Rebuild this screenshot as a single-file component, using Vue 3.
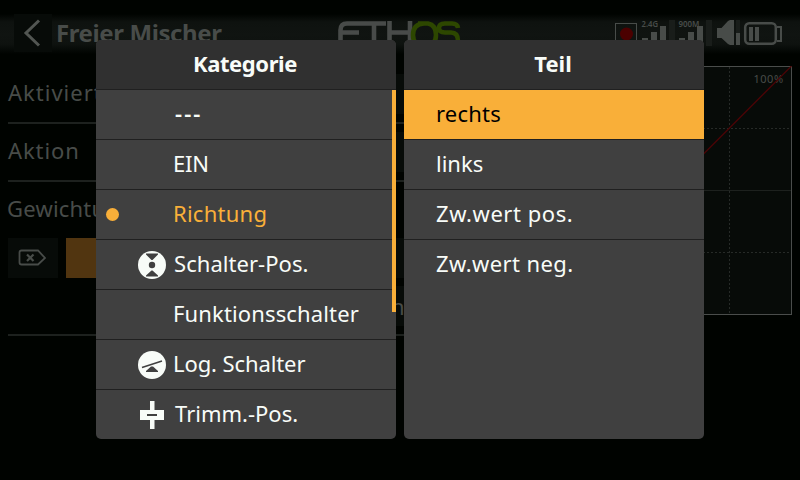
<script setup>
const categories = [
  { label: '---', icon: '', spacing: 2.1, x: 79, bold: true },
  { label: 'EIN', icon: '', spacing: -0.2, x: 77 },
  { label: 'Richtung', icon: '', spacing: 0.25, x: 77, current: true },
  { label: 'Schalter-Pos.', icon: 'switch', spacing: 0.05, x: 78 },
  { label: 'Funktionsschalter', icon: '', spacing: 0.14, x: 77 },
  { label: 'Log. Schalter', icon: 'logic', spacing: -0.1, x: 77 },
  { label: 'Trimm.-Pos.', icon: 'trim', spacing: 0, x: 79 },
]
const parts = [
  { label: 'rechts', spacing: 0.2, selected: true },
  { label: 'links', spacing: 0 },
  { label: 'Zw.wert pos.', spacing: 0.55 },
  { label: 'Zw.wert neg.', spacing: 0.4 },
]
</script>

<template>
  <div class="screen">
    <header class="topbar">
      <div class="back">
        <svg width="38" height="38" viewBox="0 0 38 38"><path d="M25 6.5 L12 19 L25 31.5" fill="none" stroke="#525652" stroke-width="3" /></svg>
      </div>
      <h1>Freier Mischer</h1>
      <svg class="logo" width="128" height="30" viewBox="0 0 128 30" fill="none" stroke-width="4.6">
        <path d="M2.5 26 V10 Q2.5 3.5 9 3.5 H48 M2.5 12.500 H21 M36 4 V26 M51.500 1 V26 M72 1 V26 M51.500 12.500 H72" stroke="#484b49" />
        <path d="M80 3.500 H90 Q98 5 98 15 Q98 26 86.500 26 Q75 26 75 15 Q75 4 86 3.500 M120 8 Q119.500 3.500 114 3.500 H107 Q101 3.500 101 8 Q101 12.500 107 12.500 H113 Q120 12.500 120 21" stroke="#2d4700" />
      </svg>
      <svg class="status" width="170" height="30" viewBox="0 0 170 30">
        <rect x="0.500" y="5.500" width="21" height="21" fill="none" stroke="#484c49" />
        <circle cx="11.500" cy="16" r="6.500" fill="#4b0000" />
        <path d="M54 2h6v26h-6zM91 2h6v26h-6zM121 2h4v13h-4z" fill="#191d1a" />
        <g fill="#484c49">
          <text x="26.500" y="8.500" font-size="8.500" font-weight="600" textLength="16.500" lengthAdjust="spacingAndGlyphs">2.4G</text>
          <text x="63.500" y="8.500" font-size="8.500" font-weight="600" textLength="21" lengthAdjust="spacingAndGlyphs">900M</text>
          <path d="M27 20h6v6h-6zM36 14h6v12h-6zM45 8h6v18h-6zM64 20h6v6h-6zM73 14h6v12h-6zM82 8h6v18h-6z" />
          <path d="M102 10h4.500L113 3l2-1h4v25h-4l-2-1-6.500-6H102zM121 15h4v12h-4zM134 9h4v14h-4zM140 9h4v14h-4z" />
        </g>
        <rect x="130.200" y="5.200" width="30.600" height="20.600" rx="4" fill="none" stroke="#484c49" stroke-width="2.500" />
        <path d="M162 9h4v14h-4" fill="none" stroke="#484c49" stroke-width="2" />
      </svg>
    </header>

    <main class="page">
      <section class="form">
        <div class="field first"><span>Aktiviert</span><i class="value"></i></div>
        <div class="field"><span>Aktion</span><i class="value"></i></div>
        <div class="field weight"><span>Gewichtung</span></div>
        <div class="controls">
          <div class="erase">
            <svg width="28" height="18" viewBox="0 0 28 18" fill="none" stroke="#484c49" stroke-width="1.800"><path d="M3.500 1.500 H20 L27 9 L20 15.500 H3.500 Q1.500 15.500 1.500 13.500 V3.500 Q1.500 1.500 3.500 1.500Z" /><path d="M9 5.500 L15.500 12 M15.500 5.500 L9 12" stroke-width="2.200" /></svg>
          </div>
          <div class="accent"></div>
          <div class="blank"></div>
        </div>
        <div class="field last"><i class="value">h</i></div>
      </section>
      <svg class="graph" width="249" height="249" viewBox="0 0 249 249" fill="none">
        <rect x="0.500" y="0.500" width="248" height="248" fill="#070b08" stroke="#4a4d4b" />
        <path d="M0 124.500H248" stroke="#1d211e" />
        <path d="M0 62.500H248M0 186.500H248M186.500 1V248" stroke="#262a27" stroke-dasharray="2 2" />
        <text x="210.500" y="17" font-size="11" letter-spacing="0.500" fill="#484c49">100%</text>
        <path d="M0 248.500L248.500 0" stroke="#4b0405" stroke-width="1.300" />
      </svg>
    </main>

    <div class="overlay">
      <section class="panel">
        <h2>Kategorie</h2>
        <ul>
          <li v-for="c in categories" :key="c.label" :class="{ current: c.current }">
            <b v-if="c.current" class="dot"></b>
            <span class="icon">
              <svg v-if="c.icon === 'switch'" width="28" height="28" viewBox="0 0 28 28">
                <circle cx="14" cy="14" r="14" fill="#f8fcf8" />
                <path d="M8 2.500H20V3.500L14.500 9H13.500L8 3.500ZM8 25.500H20V24.500L14.500 19.500H13.500L8 24.500Z" fill="#404040" /><circle cx="14" cy="14" r="3.200" fill="#404040" />
              </svg>
              <svg v-else-if="c.icon === 'logic'" width="28" height="28" viewBox="0 0 28 28">
                <circle cx="14" cy="14" r="14" fill="#f8fcf8" />
                <path d="M4 16.500L24 10" stroke="#404040" stroke-width="1.500" /><path d="M8 21H20V20L15 15.500H13L8 20Z" fill="#404040" />
              </svg>
              <svg v-else-if="c.icon === 'trim'" width="28" height="28" viewBox="0 0 28 28">
                <path d="M12 0H16.500V9H26V19H16.500V28H12V19H2V9H12Z" fill="#f8fcf8" /><path d="M9 13H19V15H9Z" fill="#404040" />
              </svg>
            </span>
            <span class="label" :class="{ bold: c.bold }" :style="{ letterSpacing: c.spacing + 'px', marginLeft: c.x - 73 + 'px' }">{{ c.label }}</span>
          </li>
        </ul>
        <div class="scrollbar"></div>
      </section>
      <section class="panel">
        <h2 class="wide">Teil</h2>
        <ul class="parts">
          <li v-for="p in parts" :key="p.label" :class="{ selected: p.selected }">
            <span class="label" :style="{ letterSpacing: p.spacing + 'px' }">{{ p.label }}</span>
          </li>
        </ul>
      </section>
    </div>
  </div>
</template>

<style>
body { margin: 0; background: #000300; }
</style>

<style scoped>
* { box-sizing: border-box; }
.screen { position: relative; width: 800px; height: 480px; overflow: hidden; background: #000300; font-family: "Noto Sans", sans-serif; color: #484c49; }
.topbar { display: flex; align-items: flex-start; height: 66px; padding: 14px 8px 0; background: linear-gradient(#000300 14px, #0e120f 22px, #101411 35px, #0e120f 44px, #000300 54px); }
.back { width: 38px; height: 38px; margin-left: 6px; background: #070b08; }
h1 { width: 281px; margin: 0 0 0 4px; font-size: 24px; line-height: 38px; letter-spacing: -0.4px; font-weight: 700; white-space: nowrap; }
.logo { margin: 6px 0 0 1px; flex: none; }
.status { margin: 4px 0 0 149px; flex: none; }
.page { display: flex; }
.form { width: 543px; padding-left: 8px; }
.field { display: flex; align-items: center; height: 58px; border-bottom: 2px solid #1d211e; font-size: 22px; letter-spacing: 0.9px; }
.field span { width: 380px; padding-bottom: 5px; }
.field.first { letter-spacing: 1px; }
.field .value { width: 155px; height: 40px; background: #070b08; font-style: normal; }
.field.weight { height: 56px; border: 0; letter-spacing: 0.2px; }
.field.weight span { margin-left: -1px; }
.controls { display: flex; gap: 8px; height: 40px; }
.erase { width: 50px; background: #070b08; padding: 11px 0 0 10px; }
.accent { width: 180px; background: #513510; }
.blank { flex: 1; background: #070b08; }
.field.last { padding-left: 240px; }
.field.last .value { flex: 1; padding-left: 143px; line-height: 40px; }
.graph { flex: none; }
.overlay { position: absolute; inset: 40px 96px 41px; display: flex; gap: 8px; }
.panel { position: relative; width: 300px; overflow: hidden; border-radius: 5px; background: #404040; color: #f8fcf8; }
h2 { height: 50px; margin: 0; padding-right: 2px; border-bottom: 1px solid #202020; background: #303030; font-size: 22px; line-height: 47px; letter-spacing: -0.4px; font-weight: 700; text-align: center; }
h2.wide { letter-spacing: 0; }
ul { margin: 0; padding: 0; list-style: none; }
li { display: flex; align-items: center; height: 50px; border-bottom: 1px solid #202020; font-size: 22px; }
li:last-child { border-bottom-color: transparent; }
.icon { display: flex; width: 28px; margin-left: 42px; margin-right: 3px; padding-top: 1px; }
.current { color: #f9af39; }
.dot { width: 13px; height: 13px; margin-left: 10px; border-radius: 50%; background: #f9af39; }
.dot + .icon { margin-left: 19px; }
.label { line-height: 47px; padding-bottom: 2px; white-space: pre; }
.bold { font-weight: 600; }
.parts li { padding-left: 32px; }
.selected { background: #f9af39; color: #000; }
.scrollbar { position: absolute; top: 50px; right: 0; width: 4px; height: 222px; background: #f9af39; }
</style>
